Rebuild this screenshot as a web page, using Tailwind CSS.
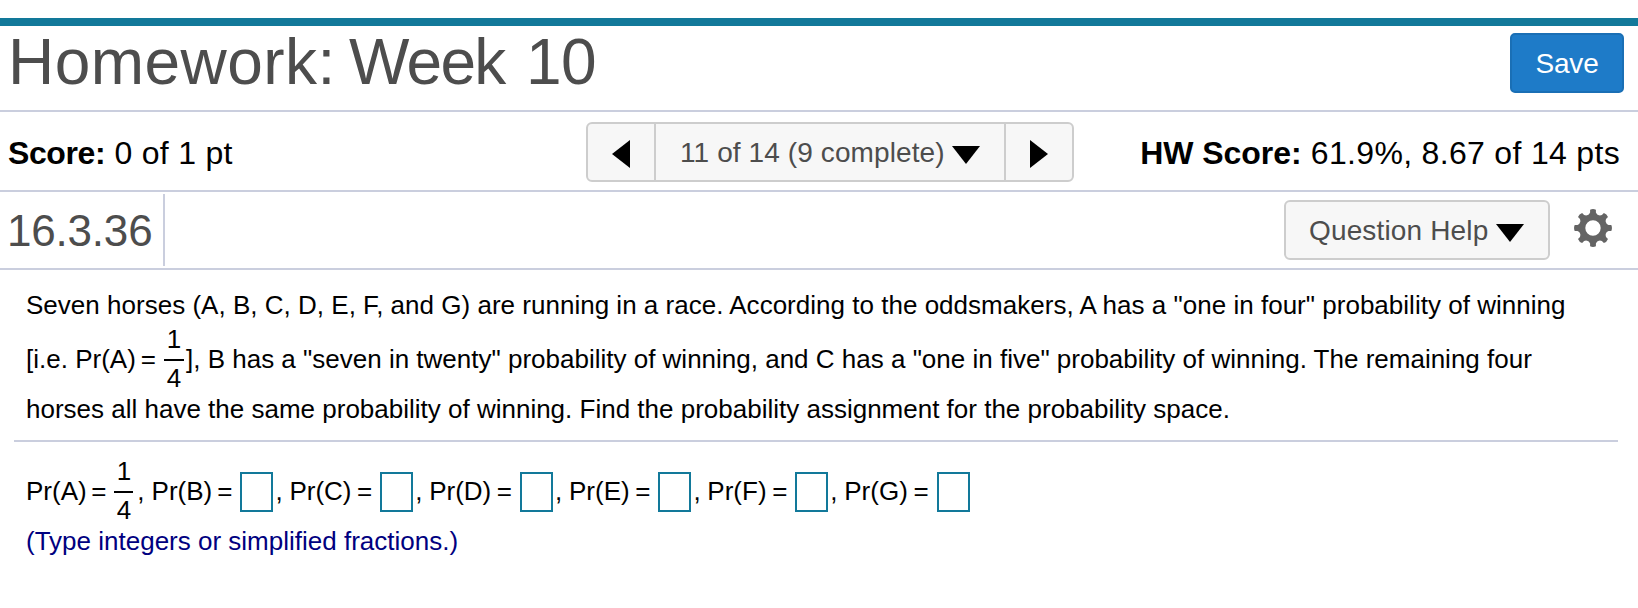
<!DOCTYPE html>
<html lang="en">

<head>
    <meta charset="UTF-8">
    <meta name="viewport" content="width=device-width, initial-scale=1.0">
    <title>Homework: Week 10</title>
    <script src="https://cdn.jsdelivr.net/npm/@tailwindcss/browser@4"></script>
</head>

<body class="h-screen pt-[18px] bg-white text-black font-['Liberation_Sans',Arial,sans-serif]">
    <!-- Header -->
    <header class="h-[94px] border-t-8 border-t-[#12799a] border-b-2 border-b-[#cacede] flex items-start justify-between pl-2 pr-[14px]">
        <h1 class="text-[64px] leading-[72px] text-[#4d4d4d] whitespace-nowrap flex">
            <span class="w-[341px] tracking-[0.45px]">Homework:</span>
            <span class="w-[177px] tracking-[-1.7px]">Week</span>
            <span class="tracking-[-0.6px]">10</span>
        </h1>
        <button class="mt-[7px] w-[114px] h-[60px] pt-0.5 rounded-[5px] border-2 border-[#1a6fb5] bg-[#1e7bc8] text-white text-[28px] tracking-[-0.2px]">Save</button>
    </header>

    <!-- Score and question navigation -->
    <div class="h-20 pt-0.5 border-b-2 border-[#cacede] grid grid-cols-[586px_488px_1fr] items-center whitespace-nowrap">
        <p class="pt-0.5 pl-2 text-[32px] leading-10 tracking-[0.3px]"><b class="tracking-[-0.4px]">Score:</b> 0 of 1 pt</p>
        <div class="h-[60px] flex rounded-md border-2 border-[#cdcdcd] bg-[#f7f7f7] text-[28px] text-[#4d4d4d]">
            <button class="w-[66px] pl-6 flex items-center">
                <svg class="w-[18px] h-7 mt-1" viewBox="0 0 18 28"><path d="M18 0v28L0 14z" /></svg>
            </button>
            <button class="flex-1 border-x-2 border-[#cdcdcd] pl-[24px] flex items-center gap-[7px]">
                <span class="pt-0.5 tracking-[0.1px]">11 of 14 (9 complete)</span>
                <svg class="w-7 h-[18px] mt-[5px]" viewBox="0 0 28 18"><path d="M0 0h28L14 18z" /></svg>
            </button>
            <button class="w-[66px] pl-6 flex items-center">
                <svg class="w-[18px] h-7 mt-1" viewBox="0 0 18 28"><path d="M0 0v28l18-14z" /></svg>
            </button>
        </div>
        <p class="pt-0.5 pr-[18px] text-right text-[32px] leading-10 tracking-[0.32px]"><b class="tracking-[-0.05px]">HW Score:</b> 61.9%, 8.67 of 14 pts</p>
    </div>

    <!-- Question toolbar -->
    <div class="h-[78px] border-b-2 border-[#cacede] flex items-center whitespace-nowrap">
        <div class="w-[165px] h-[72px] pt-0.5 pl-[7px] border-r-2 border-[#cacede] flex items-center text-[44px] tracking-[-0.2px] text-[#4d4d4d]">16.3.36</div>
        <button class="ml-auto w-[266px] h-[60px] pl-[23px] flex items-center gap-[8px] rounded-md border-2 border-[#cdcdcd] bg-[#f7f7f7] text-[28px] text-[#4d4d4d]">
            <span class="pt-0.5 tracking-[0.15px]">Question Help</span>
            <svg class="w-7 h-[18px] mt-[5px]" viewBox="0 0 28 18" fill="#000"><path d="M0 0h28L14 18z" /></svg>
        </button>
        <svg class="ml-6 mr-[26px] mb-1 w-[38px] h-[38px]" viewBox="-19 -19 38 38" fill="#646464">
            <defs><path id="tooth" d="M-4.5 -13L-2.9 -15.5V-18.3Q0 -19.6 2.9 -18.3V-15.5L4.5 -13z" /></defs>
            <use href="#tooth" />
            <use href="#tooth" transform="rotate(45)" />
            <use href="#tooth" transform="rotate(90)" />
            <use href="#tooth" transform="rotate(135)" />
            <use href="#tooth" transform="rotate(180)" />
            <use href="#tooth" transform="rotate(225)" />
            <use href="#tooth" transform="rotate(270)" />
            <use href="#tooth" transform="rotate(315)" />
            <circle r="10.9" fill="none" stroke="#646464" stroke-width="6.4" />
        </svg>
    </div>

    <!-- Problem statement -->
    <main class="text-[26px] whitespace-nowrap">
        <div class="ml-[14px] mr-5 h-[172px] pt-2 pl-3 border-b-2 border-[#cacede]">
            <div class="h-[54px] flex items-center tracking-[0.015px]">Seven horses (A, B, C, D, E, F, and G) are running in a race. According to the oddsmakers, A has a "one in four" probability of winning</div>
            <div class="h-[54px] flex items-center">
                <span>[i.e. Pr(A)</span>
                <span class="ml-[5px]">=</span>
                <span class="ml-2 w-5 pb-px flex flex-col text-center leading-7">
                    <span class="pb-[6px] border-b-2 border-black">1</span>
                    <span class="pt-[3px]">4</span>
                </span>
                <span class="ml-[2px]">], B has a "seven in twenty" probability of winning, and C has a "one in five" probability of winning. The remaining four</span>
            </div>
            <div class="h-[46px] flex items-center">horses all have the same probability of winning. Find the probability assignment for the probability space.</div>
        </div>

        <!-- Answer fields -->
        <div class="mt-[10px] h-[78px] pl-[26px] flex items-center">
            <span>Pr(A)</span>
            <span class="ml-[4.5px]">=</span>
            <span class="ml-2 w-[19px] pb-px flex flex-col text-center leading-7">
                <span class="pb-[6px] border-b-2 border-black">1</span>
                <span class="pt-[3px]">4</span>
            </span>
            <span class="ml-[4px]">,</span>
            <span class="ml-[7px]">Pr(B)</span>
            <span class="ml-[5px]">=</span>
            <span class="ml-2 mt-[2px] w-[33px] h-10 border-2 border-[#12799a]"></span>
            <span class="ml-[2px]">,</span>
            <span class="ml-[6.7px]">Pr(C)</span>
            <span class="ml-[5.6px]">=</span>
            <span class="ml-2 mt-[2px] w-[33px] h-10 border-2 border-[#12799a]"></span>
            <span class="ml-[2px]">,</span>
            <span class="ml-[6.7px]">Pr(D)</span>
            <span class="ml-[5.6px]">=</span>
            <span class="ml-2 mt-[2px] w-[33px] h-10 border-2 border-[#12799a]"></span>
            <span class="ml-[2px]">,</span>
            <span class="ml-[6.7px]">Pr(E)</span>
            <span class="ml-[5.6px]">=</span>
            <span class="ml-2 mt-[2px] w-[33px] h-10 border-2 border-[#12799a]"></span>
            <span class="ml-[2px]">,</span>
            <span class="ml-[6.7px]">Pr(F)</span>
            <span class="ml-[5.6px]">=</span>
            <span class="ml-2 mt-[2px] w-[33px] h-10 border-2 border-[#12799a]"></span>
            <span class="ml-[2px]">,</span>
            <span class="ml-[6.7px]">Pr(G)</span>
            <span class="ml-[5.6px]">=</span>
            <span class="ml-2 mt-[2px] w-[33px] h-10 border-2 border-[#12799a]"></span>
        </div>
        <p class="pl-[26px] leading-[22px] text-[#000080]">(Type integers or simplified fractions.)</p>
    </main>
</body>

</html>
